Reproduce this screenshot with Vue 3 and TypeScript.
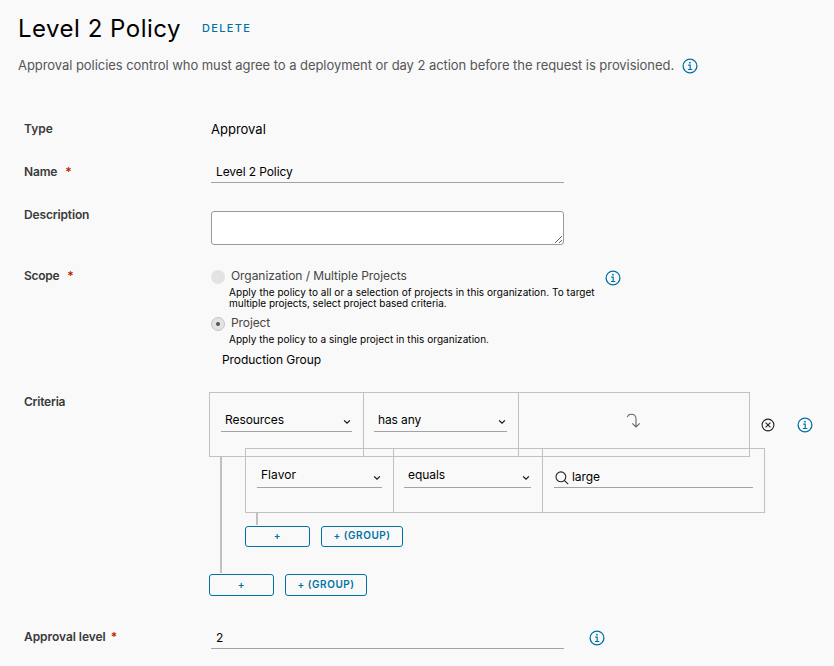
<script setup lang="ts">
import { ref, h } from 'vue'

const name = ref('Level 2 Policy')
const description = ref('')
const level = ref('2')
const value = ref('large')

const InfoIcon = () =>
  h('svg', { width: 16, height: 16, viewBox: '0 0 16 16', fill: 'none', stroke: '#0072a3' }, [
    h('circle', { cx: 8, cy: 8, r: 6.9, 'stroke-width': 1.3 }),
    h('circle', { cx: 7.9, cy: 4.7, r: 0.9, fill: '#0072a3', stroke: 'none' }),
    h('path', { d: 'M6.2 7.2h2v4.2M5.9 11.5h4.4', 'stroke-width': 1.2 }),
  ])

const Chevron = () =>
  h('svg', { width: 8, height: 6, viewBox: '0 0 8 6', fill: 'none', stroke: '#111', 'stroke-width': 1.2 }, [
    h('path', { d: 'M1.1 1.3L4 4.2 6.9 1.3' }),
  ])
</script>

<template>
  <main class="page">
    <header class="head">
      <h1>Level 2 Policy</h1>
      <button class="delete">DELETE</button>
    </header>
    <div class="intro">
      <p>Approval policies control who must agree to a deployment or day 2 action before the request is provisioned.</p>
      <InfoIcon />
    </div>

    <section class="form">
      <div class="row type">
        <label class="t-type">Type</label>
        <div class="approval">Approval</div>
      </div>
      <div class="row name">
        <label class="t-name">Name<i>*</i></label>
        <input v-model="name" class="line-input" />
      </div>
      <div class="row desc">
        <label class="t-desc">Description</label>
        <textarea v-model="description"></textarea>
      </div>
      <div class="row scope">
        <label class="t-scope">Scope<i>*</i></label>
        <div class="scope-body">
          <div class="options">
            <div class="option"><span class="radio"></span><span class="org">Organization / Multiple Projects</span></div>
            <p class="hint"><span>Apply the policy to all or a selection of projects in this organization. To target</span><br /><span class="hint-2">multiple projects, select project based criteria.</span></p>
            <div class="option second"><span class="radio checked"></span><span class="proj">Project</span></div>
            <p class="hint single">Apply the policy to a single project in this organization.</p>
            <div class="group-name">Production Group</div>
          </div>
          <InfoIcon class="scope-info" />
        </div>
      </div>

      <div class="row criteria">
        <label class="t-crit">Criteria</label>
        <div class="tree">
          <div class="clause-line">
            <div class="clause outer">
              <div class="cell"><div class="select"><span>Resources</span><Chevron /></div></div>
              <div class="cell"><div class="select"><span class="any">has any</span><Chevron /></div></div>
              <div class="cell arrow">
                <svg width="16" height="16" viewBox="0 0 16 16" fill="none" stroke="#666" stroke-width="1.1">
                  <path d="M1.3 4.2C1.8 2.1 3.5 1.2 5.4 1.2c2.700 0 4.600 1.800 4.600 4.600v8M6.300 10.300l3.700 3.600 3.800-3.600" />
                </svg>
              </div>
            </div>
            <svg class="close" width="14" height="14" viewBox="0 0 14 14" fill="none" stroke="#222" stroke-width="1.1">
              <circle cx="7" cy="7" r="5.900" /><path d="M4.600 4.600l4.800 4.800M9.400 4.600l-4.800 4.800" />
            </svg>
            <InfoIcon class="crit-info" />
          </div>
          <div class="branch">
            <span class="rail"></span>
            <div class="nested">
              <div class="clause inner">
                <div class="cell"><div class="select"><span class="flavor">Flavor</span><Chevron /></div></div>
                <div class="cell"><div class="select"><span>equals</span><Chevron /></div></div>
                <div class="cell">
                  <div class="search">
                    <svg width="14" height="14" viewBox="0 0 14 14" fill="none" stroke="#222" stroke-width="1.1">
                      <circle cx="5.900" cy="5.800" r="4.900" /><path d="M9.300 9.300l3.900 3.900" />
                    </svg>
                    <input v-model="value" />
                  </div>
                </div>
              </div>
              <span class="rail short"></span>
              <div class="actions"><button>+</button><button class="grp">+ (GROUP)</button></div>
            </div>
          </div>
          <div class="actions last"><button>+</button><button class="grp">+ (GROUP)</button></div>
        </div>
      </div>

      <div class="row level">
        <label class="t-level">Approval level<i>*</i></label>
        <div class="level-body">
          <input v-model="level" class="line-input" />
          <InfoIcon />
        </div>
      </div>
    </section>
  </main>
</template>

<style>
body { background: #f9f9f9; overflow: hidden; }
</style>

<style scoped>
* { box-sizing: border-box; }
.page { height: 666px; overflow: hidden; padding: 12px 0 0 18px; font: 12px/16px Inter, "Liberation Sans", sans-serif; color: #000; background: #f9f9f9; }
h1, p { margin: 0; }
svg { display: block; flex: none; }
input, button, textarea { font: inherit; color: inherit; letter-spacing: inherit; margin: 0; padding: 0; }
input { outline: none; border: 0; background: transparent; }
.head { display: flex; height: 44px; }
h1 { width: 184px; font-size: 24px; line-height: 34px; font-weight: 400; letter-spacing: .5px; white-space: nowrap; }
.delete { height: 16px; margin-top: 8px; border: 0; background: none; color: #0072a3; font-size: 11px; font-weight: 500; letter-spacing: 1.35px; }
.intro { display: flex; height: 65px; gap: 8px; color: #565656; font-size: 13px; line-height: 18px; }
.intro p { width: 656px; white-space: nowrap; letter-spacing: -.055px; }
.intro svg { margin-top: 2px; }
.form { padding-left: 6px; }
.row { display: grid; grid-template-columns: 187px 1fr; align-items: start; }
label { display: flex; color: #3a3a3a; font-weight: 600; white-space: nowrap; }
label i { margin-left: 8px; color: #c21d00; font-style: normal; letter-spacing: 0; }
.t-name { letter-spacing: -.15px; }
.t-desc { letter-spacing: -.15px; }
.t-scope { letter-spacing: -.3px; }
.t-crit { letter-spacing: -.22px; padding-top: 2px; }
.t-level { letter-spacing: -.05px; }
.t-level i { margin-left: 5px; }
.type, .name { height: 43px; }
.approval { font-size: 13px; }
.line-input { width: 353px; height: 19px; padding: 0 5px 3px; border-bottom: 1px solid #a3a3a3; letter-spacing: -.1px; }
.desc { height: 61px; }
textarea { width: 353px; height: 34px; margin-top: 4px; border: 1px solid #9a9a9a; border-radius: 3px; background: #fff; outline: none; resize: both; display: block; }
.scope { height: 124px; }
.scope-body { display: flex; }
.options { width: 394px; }
.option { display: flex; color: #454545; white-space: nowrap; }
.radio { width: 14px; height: 14px; margin: 2px 6px 0 0; border-radius: 50%; background: #e3e3e3; }
.radio.checked { display: grid; place-items: center; border: 1px solid #c4c4c4; }
.radio.checked::after { content: ""; width: 4px; height: 4px; border-radius: 50%; background: #565656; }
.org { letter-spacing: -.06px; }
.proj { letter-spacing: -.1px; }
.hint { padding: 3px 0 0 18px; font-size: 10px; line-height: 11px; letter-spacing: .055px; white-space: nowrap; }
.hint-2 { letter-spacing: -.02px; }
.second { margin-top: 6px; }
.single { letter-spacing: .036px; }
.group-name { margin: 7px 0 0 11px; letter-spacing: -.055px; }
.scope-info { margin-top: 2px; }
.criteria { height: 235px; }
.tree { margin-left: -2px; }
.clause-line { display: flex; }
.clause { display: grid; height: 65px; border: 1px solid #c1c1c1; }
.outer { width: 541px; grid-template-columns: 153px 155px 1fr; }
.inner { width: 520px; grid-template-columns: 147px 149px 1fr; }
.cell { padding: 19px 11px 0; border-left: 1px solid #c1c1c1; }
.cell:first-child { border-left: 0; }
.cell:nth-child(2) { padding-left: 10px; }
.select { display: flex; justify-content: space-between; height: 20px; padding: 0 1px 0 4px; border-bottom: 1px solid #a3a3a3; letter-spacing: -.07px; }
.select svg { margin-top: 7px; }
.any { letter-spacing: -.12px; }
.inner .select { height: 21px; }
.inner .cell { padding-top: 18px; }
.inner .select svg { margin-top: 8px; }
.flavor { letter-spacing: .04px; }
.search { display: flex; height: 21px; border-bottom: 1px solid #a3a3a3; }
.search svg { margin: 4px 3px 0 1px; }
.search input { width: 150px; height: 18px; letter-spacing: -.06px; }
.cell.arrow { display: flex; justify-content: center; padding-top: 20px; }
.close { margin: 26px 0 0 11px; }
.crit-info { margin: 25px 0 0 22px; }
.branch { display: flex; height: 116px; padding-left: 11px; }
.rail { display: block; flex: none; width: 2px; height: 116px; background: #c1c1c1; }
.nested { margin: -9px 0 0 23px; }
.rail.short { height: 12px; margin-left: 11px; }
.actions { display: flex; gap: 11px; margin-top: 1px; }
.actions button { width: 65px; height: 21px; padding-bottom: 2px; border: 1px solid #0072a3; border-radius: 3px; background: none; color: #0072a3; font-size: 10px; line-height: 17px; font-weight: 600; letter-spacing: .55px; }
.actions .grp { width: 82px; }
.actions.last button { height: 22px; }
.level { padding-top: 2px; }
.level-body { display: flex; gap: 25px; }
.level-body .line-input { height: 20px; }
.level-body svg { margin-top: 1px; }
</style>
